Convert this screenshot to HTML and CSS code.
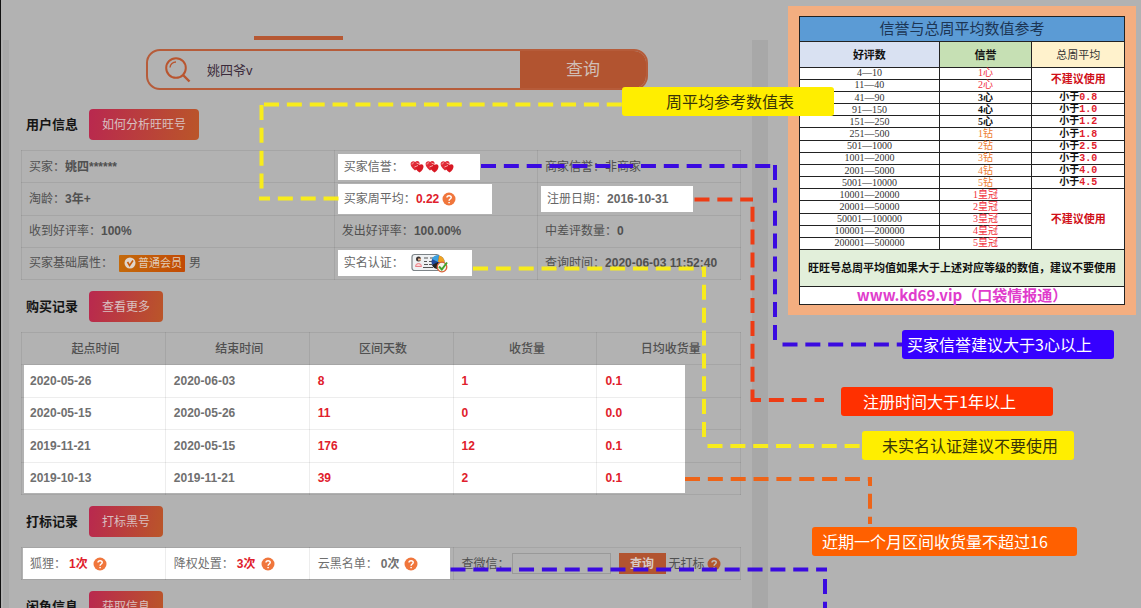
FILE: index.html
```html
<!DOCTYPE html>
<html lang="zh-CN">
<head>
<meta charset="utf-8">
<title>用户信息查询</title>
<link rel="stylesheet" href="styles.css">
</head>
<body>
<svg class="defs" aria-hidden="true">
  <symbol id="heart" viewBox="0 0 14 13">
    <path d="M5 10.500C2 8 .5 6 .6 3.800.8 1.500 3.400.4 5.200 2 6.800.4 9.400 1 9.600 3.500 9.800 6 8 8.500 5 10.500z" fill="#e02a36"/>
    <path d="M9.500 12.500C6.500 10.400 5.200 8.600 5.400 6.400 5.600 4.300 7.800 3.400 9.500 4.900 11.200 3.400 13.400 4.300 13.500 6.400 13.600 8.600 12 10.600 9.500 12.500z" fill="#d81824"/>
    <path d="M2 4.500C2 3 3 2.600 4 3M4.500 7L8 5.500M6.500 3L10 4.500" stroke="#f9a9a9" fill="none"/>
  </symbol>
  <symbol id="help" viewBox="0 0 14 14">
    <circle cx="7" cy="7" r="6.500" fill="#f0763c"/>
    <path d="M5 5.600C5 3 9.200 3 9.200 5.500 9.200 7 7.100 7 7.100 8.700M7.100 9.900V11.300" stroke="#fff" stroke-width="1.500" fill="none"/>
  </symbol>
</svg>
<div class="page">
  <main class="main">
    <div class="top"><div class="tabbar"></div></div>
    <div class="panel">
      <form class="search">
        <svg class="search-icon" viewBox="0 0 26 26" fill="none" stroke="#b9552f"><circle cx="11" cy="11" r="9.800" stroke-width="2"/><path d="M5 10.500A6 6 0 0 1 11 5" stroke-width="1.400"/><path d="M18 18L24.500 24.500" stroke-width="2.400"/></svg>
        <input class="search-input" type="text" value="姚四爷v" aria-label="旺旺号">
        <button class="search-btn" type="button">查询</button>
      </form>

      <div class="head first"><h2>用户信息</h2><button class="btn" type="button">如何分析旺旺号</button></div>
      <table class="grid info">
        <colgroup><col class="wide"><col><col></colgroup>
        <tr><td>买家：<b>姚四******</b></td><td><span class="spot credit">买家信誉：<span class="hearts"><svg><use href="#heart"/></svg><svg><use href="#heart"/></svg><svg><use href="#heart"/></svg></span></span></td><td>商家信誉：非商家</td></tr>
        <tr><td>淘龄：<b>3年+</b></td><td><span class="spot weekly">买家周平均：<b class="red">0.22</b><svg class="help"><use href="#help"/></svg></span></td><td><span class="spot date">注册日期：<b>2016-10-31</b></span></td></tr>
        <tr><td>收到好评率：<b>100%</b></td><td>发出好评率：<b>100.00%</b></td><td>中差评数量：<b>0</b></td></tr>
        <tr><td><span class="attrs">买家基础属性：<span class="member"><svg viewBox="0 0 12 12"><circle cx="6" cy="6" r="5.500" fill="#e0d5cc"/><path d="M3.500 5L5.600 8.500 9 3.500" stroke="#c85a08" stroke-width="1.600" fill="none"/></svg>普通会员</span>男</span></td>
          <td><span class="spot real">实名认证：<svg class="idcard" viewBox="0 0 38 20"><rect x="1" y="1.500" width="27" height="16" rx="2.500" fill="#eef1f3" stroke="#7c8387" stroke-width="1.200"/><circle cx="7.500" cy="6" r="2.500" fill="#3c3433"/><path d="M7 6.500H10" stroke="#e8b48f" stroke-width="2"/><path d="M4.500 13.500a3 3 0 0 1 6 0z" fill="#fbd5d5" stroke="#ea7f86"/><path d="M13 5h4m2 0h3M13 8.500h3m2 0h4M13 11.500h4m1 0h3M12 14.500h10" stroke="#555" stroke-width="1.200"/><circle cx="27" cy="9" r="6.500" fill="#204a9c"/><path d="M27 9L21 6A6.500 6.500 0 0 1 28 2.500z" fill="#39a0e0"/><path d="M27 9L28 2.500A6.500 6.500 0 0 1 33.500 9z" fill="#f0a322"/><path d="M27 9L21 12A6.500 6.500 0 0 0 27 16z" fill="#222"/><circle cx="31" cy="14" r="4.800" fill="#f6f4ee" stroke="#d86136" stroke-width="1.300"/><path d="M28 13.500L30.800 16.500 36 9.500" stroke="#42a52c" stroke-width="2" fill="none"/></svg></span></td>
          <td>查询时间：<b>2020-06-03 11:52:40</b></td></tr>
      </table>

      <div class="head"><h2>购买记录</h2><button class="btn" type="button">查看更多</button></div>
      <table class="grid records">
        <thead><tr><th>起点时间</th><th>结束时间</th><th>区间天数</th><th>收货量</th><th>日均收货量</th></tr></thead>
        <tbody>
          <tr><td>2020-05-26</td><td>2020-06-03</td><td>8</td><td>1</td><td>0.1</td></tr>
          <tr><td>2020-05-15</td><td>2020-05-26</td><td>11</td><td>0</td><td>0.0</td></tr>
          <tr><td>2019-11-21</td><td>2020-05-15</td><td>176</td><td>12</td><td>0.1</td></tr>
          <tr><td>2019-10-13</td><td>2019-11-21</td><td>39</td><td>2</td><td>0.1</td></tr>
        </tbody>
      </table>

      <div class="head"><h2>打标记录</h2><button class="btn" type="button">打标黑号</button></div>
      <table class="grid marks">
        <colgroup><col class="fifth"><col class="fifth"><col class="fifth"><col></colgroup>
        <tr>
          <td><span class="mark">狐狸：<b class="red">1次</b><svg class="help"><use href="#help"/></svg></span></td>
          <td><span class="mark">降权处置：<b class="red">3次</b><svg class="help"><use href="#help"/></svg></span></td>
          <td><span class="mark">云黑名单：<b>0次</b><svg class="help"><use href="#help"/></svg></span></td>
          <td><span class="wechat"><label for="wx">查微信：</label><input id="wx" type="text"><button type="button">查询</button><span>无打标</span><svg class="help"><use href="#help"/></svg></span></td>
        </tr>
      </table>

      <div class="head"><h2>闲鱼信息</h2><button class="btn" type="button">获取信息</button></div>
    </div>
  </main>

  <aside class="card">
    <table class="levels">
      <colgroup><col class="c1"><col class="c2"><col class="c3"></colgroup>
      <tr class="title"><th colspan="3">信誉与总周平均数值参考</th></tr>
      <tr class="cols"><th>好评数</th><th>信誉</th><th>总周平均</th></tr>
      <tr><td>4—10</td><td class="r">1心</td><td class="no" rowspan="2">不建议使用</td></tr>
      <tr><td>11—40</td><td class="r">2心</td></tr>
      <tr><td>41—90</td><td class="k">3心</td><td class="lt">小于<b>0.8</b></td></tr>
      <tr><td>91—150</td><td class="k">4心</td><td class="lt">小于<b>1.0</b></td></tr>
      <tr><td>151—250</td><td class="k">5心</td><td class="lt">小于<b>1.2</b></td></tr>
      <tr><td>251—500</td><td class="o">1钻</td><td class="lt">小于<b>1.8</b></td></tr>
      <tr><td>501—1000</td><td class="o">2钻</td><td class="lt">小于<b>2.5</b></td></tr>
      <tr><td>1001—2000</td><td class="o">3钻</td><td class="lt">小于<b>3.0</b></td></tr>
      <tr><td>2001—5000</td><td class="o">4钻</td><td class="lt">小于<b>4.0</b></td></tr>
      <tr><td>5001—10000</td><td class="o">5钻</td><td class="lt">小于<b>4.5</b></td></tr>
      <tr><td>10001—20000</td><td class="r">1皇冠</td><td class="no" rowspan="5">不建议使用</td></tr>
      <tr><td>20001—50000</td><td class="r">2皇冠</td></tr>
      <tr><td>50001—100000</td><td class="r">3皇冠</td></tr>
      <tr><td>100001—200000</td><td class="r">4皇冠</td></tr>
      <tr><td>200001—500000</td><td class="r">5皇冠</td></tr>
      <tr class="note"><td colspan="3">旺旺号总周平均值如果大于上述对应等级的数值，建议不要使用</td></tr>
      <tr class="site"><td colspan="3">www.kd69.vip（口袋情报通）</td></tr>
    </table>
  </aside>

  <svg class="lines" fill="none" stroke-width="4" stroke-dasharray="15 7.850" aria-hidden="true">
    <g stroke="#f8ec1c">
      <path d="M264 104.500H623"/><path d="M261.500 105V196"/><path d="M259 198.500H340" stroke-dashoffset="4"/>
      <path d="M473 268.500H706"/><path d="M704 268V438" stroke-dashoffset="6"/><path d="M707.500 446H862"/>
    </g>
    <g stroke="#3a0ae0">
      <path d="M481 166H771"/><path d="M775 165V341"/><path d="M782.500 344.500H902"/>
      <path d="M450.500 569.500H827"/><path d="M825 579V608"/>
    </g>
    <g stroke="#ee3c14">
      <path d="M694.500 199.500H753"/><path d="M752.500 206.700V402"/><path d="M752 400H824" stroke-dashoffset="6"/>
    </g>
    <g stroke="#ee6418">
      <path d="M685 479H872"/><path d="M870 477V524" stroke-dashoffset="6"/>
    </g>
  </svg>
  <div class="tip yellow t1">周平均参考数值表</div>
  <div class="tip blue t2">买家信誉建议大于3心以上</div>
  <div class="tip vermilion t3">注册时间大于1年以上</div>
  <div class="tip yellow t4">未实名认证建议不要使用</div>
  <div class="tip orange t5">近期一个月区间收货量不超过16</div>
</div>
</body>
</html>
```

FILE: styles.css
```css
* { box-sizing: border-box; }
body {
  margin: 0;
  background: #b2b2b2;
  font: 12px/16px "Liberation Sans", "Noto Sans CJK SC", sans-serif;
  color: #505050;
}
button, input { font: inherit; margin: 0; padding: 0; border: 0; background: none; color: inherit; }
.defs { position: absolute; width: 0; height: 0; }
.page {
  position: relative;
  height: 100vh;
  overflow: hidden;
  border-left: 1px solid #111;
}
.main { width: 67.3%; padding-left: 2px; }
.top { height: 40px; display: flex; align-items: flex-end; padding-left: 251px; }
.tabbar { width: 89px; height: 4px; background: #b65833; }
.panel { border-left: 6px solid #aaa; border-right: 16px solid #a8a8a8; padding: 9px 11px 0 12px; }

.search {
  display: flex;
  align-items: center;
  width: 502px;
  height: 41px;
  margin-left: 125px;
  border: 2px solid #b65c3a;
  border-radius: 14px;
  overflow: hidden;
}
.search-icon { width: 26px; height: 26px; margin: 0 16px 0 17px; flex: none; }
.search-input { flex: 1; min-width: 0; height: 100%; font-size: 13px; color: #3a2a3a; outline: 0; }
.search-btn { width: 126px; height: 100%; flex: none; background: #b25430; color: #d0beb6; font-size: 17px; }

.head { display: flex; align-items: center; gap: 11px; padding: 11px 0 10px 5px; }
.head.first { padding-top: 19px; }
.head h2 { margin: 0; font-size: 13px; line-height: 20px; font-weight: 700; color: #151515; }
.btn {
  height: 31px;
  padding: 0 13px;
  border-radius: 4px;
  background: linear-gradient(100deg, #b9284f, #ba5629);
  color: #d8c0c0;
}

.grid { width: 100%; border-collapse: collapse; table-layout: fixed; }
.grid td, .grid th { border: 1px solid rgba(0, 0, 0, .07); padding: 0; white-space: nowrap; }
.wide { width: 43.5%; }
.info { height: 130px; }
.info td { height: 32px; padding-left: 7px; }
.spot {
  display: flex;
  align-items: center;
  height: 26px;
  margin-left: -4px;
  padding-left: 6px;
  background: #fff;
  color: #666;
}
.credit { width: 142px; }
.weekly { width: 154px; height: 30px; }
.date { width: 152px; }
.real { width: 134px; }
.hearts { display: flex; gap: 1px; margin-left: 6px; }
.hearts svg { width: 14px; height: 13px; }
.red { color: #e0202c; }
.help { width: 14px; height: 14px; margin-left: 3px; flex: none; }
.idcard { width: 38px; height: 20px; margin-left: 7px; }
.attrs { display: flex; align-items: center; }
.member {
  display: flex;
  align-items: center;
  gap: 2px;
  height: 17px;
  margin: 0 4px 0 6px;
  padding: 0 3px 0 5px;
  border-radius: 1px;
  background: linear-gradient(90deg, #c46a0c, #c24a04);
  color: #e0cbb8;
  font-size: 11px;
}
.member svg { width: 12px; height: 12px; }

.records { height: 163px; background: linear-gradient(#fff, #fff) 2px 32px / 661px 128px no-repeat; }
.records th { height: 32px; padding-left: 4px; font-weight: 500; }
.records td { height: 32px; padding-left: 8px; font-weight: 700; color: #707070; }
.records td:nth-child(n+3) { color: #e0202c; }

.marks { height: 33px; background: linear-gradient(#fff, #fff) 1px 0 / 427px 31px no-repeat; }
.fifth { width: 20%; }
.marks td { height: 32px; padding-left: 8px; }
.mark, .wechat { display: flex; align-items: center; }
.mark { color: #707070; }
.mark b { margin-left: 3px; }
.mark .help { margin-left: 5px; }
.wechat input { width: 99px; height: 21px; margin-left: 2px; border: 1px solid #999; }
.wechat button { width: 47px; height: 21px; margin: 0 3px 0 8px; background: #b25430; color: #d8cac4; font-weight: 700; }
.wechat .help { margin-left: 2px; filter: brightness(.75); }

.card {
  position: absolute;
  top: 6px;
  left: 787px;
  width: 348px;
  padding: 10px 11px;
  background: #f4ae80;
}
.levels {
  width: 100%;
  height: 289px;
  border-collapse: collapse;
  table-layout: fixed;
  background: #fff;
  color: #333;
  font: 10px/10px "Liberation Serif", "Noto Sans CJK SC", serif;
  text-align: center;
}
.c1 { width: 43%; }
.c2 { width: 28.5%; }
.levels td, .levels th { height: 12px; padding: 0; border: 1px solid #222; white-space: nowrap; }
.levels .title th { height: 25px; background: #5b9bd5; color: #1c3554; font-size: 15px; font-weight: 400; }
.levels .cols th { height: 25px; font-size: 11px; background: #d9e1f2; color: #111; }
.levels .cols th:nth-child(2) { background: #c6e0b4; }
.levels .cols th:nth-child(3) { background: #fff2cc; font-weight: 400; color: #333; }
.levels .r { color: #f0303c; }
.levels .k { color: #111; font-weight: 700; }
.levels .o { color: #ed7d31; }
.levels .lt { color: #111; font-weight: 700; }
.levels .lt b { color: #e0202c; font-family: "Liberation Mono", monospace; }
.levels .no { color: #d01018; font-size: 11px; font-weight: 700; }
.levels .note td { height: 36px; background: #e2efda; color: #111; font-size: 11px; font-weight: 700; }
.levels .site td { height: 18px; color: #e03ccc; font: 700 15px/16px "Noto Sans CJK SC", sans-serif; }

.lines { position: absolute; top: 0; left: -1px; width: 1141px; height: 608px; pointer-events: none; }
.tip {
  position: absolute;
  width: 212px;
  height: 29px;
  border-radius: 3px;
  font: 16px/28px "Noto Sans CJK SC", sans-serif;
  white-space: nowrap;
  color: #fff;
}
.yellow { background: #ffee00; color: #3a3608; }
.blue { background: #3600ff; }
.vermilion { background: #ff3000; }
.orange { background: #ff6000; }
.t1 { top: 87px; left: 621px; padding-left: 44px; }
.t2 { top: 330px; left: 901px; padding-left: 5px; }
.t3 { top: 387px; left: 840px; padding-left: 22px; }
.t4 { top: 431px; left: 861px; padding-left: 20px; }
.t5 { top: 527px; left: 811px; width: 265px; padding-left: 10px; }
```
